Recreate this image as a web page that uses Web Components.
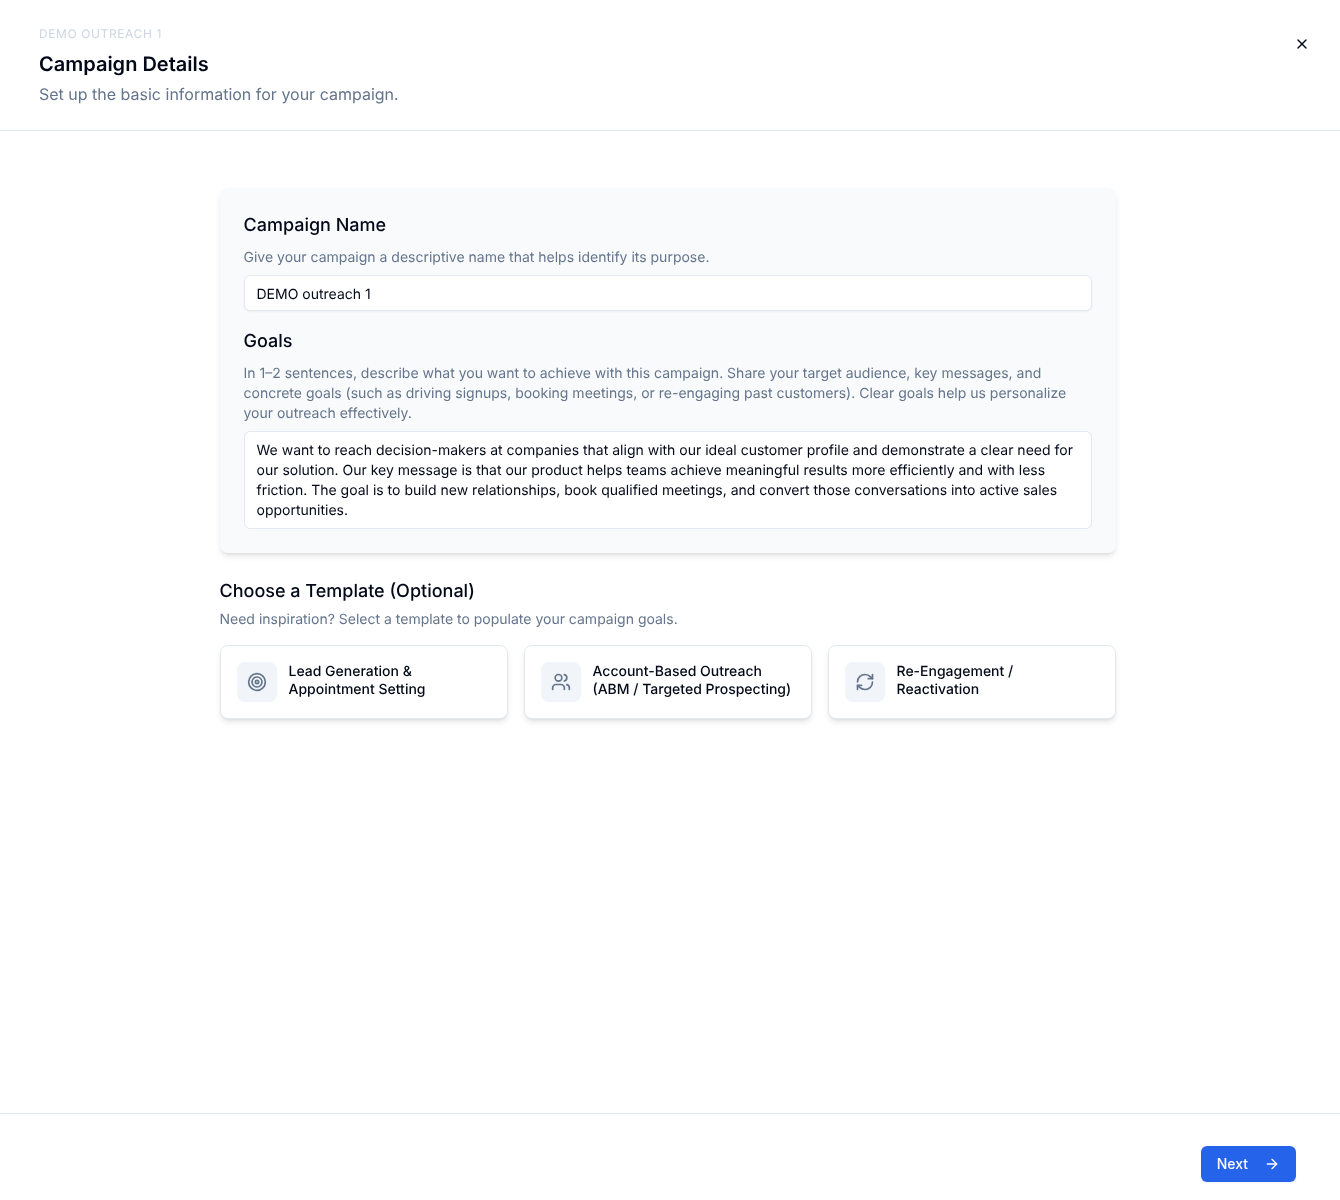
<!DOCTYPE html>
<html lang="en">
<head>
<meta charset="utf-8">
<title>Campaign Details</title>
<style>
    html, body { margin: 0; background: #fff; }
    body {
        font-family: Inter, "Liberation Sans", sans-serif;
        color: #020817;
        -webkit-font-smoothing: antialiased;
        text-rendering: geometricPrecision;
    }
</style>
</head>
<body>
<campaign-wizard>
    <wizard-header slot="header" eyebrow="DEMO outreach 1" title="Campaign Details" subtitle="Set up the basic information for your campaign."></wizard-header>

    <form-card>
        <form-field label="Campaign Name" hint="Give your campaign a descriptive name that helps identify its purpose.">
            <div class="value">DEMO outreach 1</div>
        </form-field>
        <form-field multiline label="Goals" hint="In 1–2 sentences, describe what you want to achieve with this campaign. Share your target audience, key messages, and concrete goals (such as driving signups, booking meetings, or re-engaging past customers). Clear goals help us personalize your outreach effectively.">
            <div class="value">We want to reach decision-makers at companies that align with our ideal customer profile and demonstrate a clear need for our solution. Our key message is that our product helps teams achieve meaningful results more efficiently and with less friction. The goal is to build new relationships, book qualified meetings, and convert those conversations into active sales opportunities.</div>
        </form-field>
    </form-card>

    <template-picker heading="Choose a Template (Optional)" hint="Need inspiration? Select a template to populate your campaign goals.">
        <template-card icon="target">Lead Generation &amp;<br>Appointment Setting</template-card>
        <template-card icon="users">Account-Based Outreach<br>(ABM / Targeted Prospecting)</template-card>
        <template-card icon="refresh">Re-Engagement /<br>Reactivation</template-card>
    </template-picker>

    <wizard-footer slot="footer"></wizard-footer>
</campaign-wizard>

<script>
'use strict';

const svg = (inner, size) => `<svg xmlns="http://www.w3.org/2000/svg" width="${size}" height="${size}" viewBox="0 0 24 24" fill="none" stroke="currentColor" stroke-width="2" stroke-linecap="round" stroke-linejoin="round">${inner}</svg>`;

const icons = {
    target: '<circle cx="12" cy="12" r="10"/><circle cx="12" cy="12" r="6"/><circle cx="12" cy="12" r="2"/>',
    users: '<path d="M16 21v-2a4 4 0 0 0-4-4H6a4 4 0 0 0-4 4v2"/><circle cx="9" cy="7" r="4"/><path d="M22 21v-2a4 4 0 0 0-3-3.87"/><path d="M16 3.13a4 4 0 0 1 0 7.75"/>',
    refresh: '<path d="M3 12a9 9 0 0 1 9-9 9.75 9.75 0 0 1 6.74 2.74L21 8"/><path d="M21 3v5h-5"/><path d="M21 12a9 9 0 0 1-9 9 9.75 9.75 0 0 1-6.74-2.74L3 16"/><path d="M8 16H3v5"/>',
    close: '<path d="M18 6 6 18"/><path d="m6 6 12 12"/>',
    arrow: '<path d="M5 12h14"/><path d="m12 5 7 7-7 7"/>',
};

class CampaignWizard extends HTMLElement {
    constructor()
    {
        super();
        this.attachShadow({ mode: 'open' }).innerHTML = `
            <style>
                :host {
                    display: flex;
                    flex-direction: column;
                    height: 1200px;
                    overflow: hidden;
                    will-change: transform;
                }
                main {
                    flex: 1;
                    display: flex;
                    flex-direction: column;
                    gap: 24px;
                    width: 896px;
                    padding-top: 57px;
                    margin-left: 219.5px;
                }
            </style>
            <slot name="header"></slot>
            <main><slot></slot></main>
            <slot name="footer"></slot>
        `;
    }
}

class WizardHeader extends HTMLElement {
    connectedCallback()
    {
        this.attachShadow({ mode: 'open' }).innerHTML = `
            <style>
                :host {
                    display: flex;
                    justify-content: space-between;
                    align-items: flex-start;
                    height: 130px;
                    padding: 0 30px 0 39px;
                    border-bottom: 1px solid #e2e8f0;
                }
                .eyebrow {
                    margin-top: 26px;
                    font-size: 12px;
                    line-height: 16px;
                    letter-spacing: 0.6px;
                    text-transform: uppercase;
                    color: #cbd5e1;
                }
                h1 {
                    margin: 8px 0 4px;
                    font-size: 20px;
                    line-height: 28px;
                    font-weight: 600;
                }
                p {
                    margin: 0;
                    font-size: 16px;
                    line-height: 24px;
                    color: #64748b;
                }
                .close {
                    display: flex;
                    margin-top: 36px;
                }
            </style>
            <div>
                <div class="eyebrow">${this.getAttribute('eyebrow')}</div>
                <h1>${this.getAttribute('title')}</h1>
                <p>${this.getAttribute('subtitle')}</p>
            </div>
            <span class="close">${svg(icons.close, 16)}</span>
        `;
    }
}

class FormCard extends HTMLElement {
    constructor()
    {
        super();
        this.attachShadow({ mode: 'open' }).innerHTML = `
            <style>
                :host {
                    display: flex;
                    flex-direction: column;
                    gap: 17px;
                    padding: 24px;
                    background: #f8fafc;
                    border-radius: 8px;
                    box-shadow: 0 4px 6px -1px rgba(0,0,0,.1), 0 2px 4px -2px rgba(0,0,0,.1);
                }
            </style>
            <slot></slot>
        `;
    }
}

class FormField extends HTMLElement {
    connectedCallback()
    {
        this.attachShadow({ mode: 'open' }).innerHTML = `
            <style>
                :host { display: block; }
                h2 {
                    margin: 0 0 8px;
                    font-size: 18px;
                    line-height: 28px;
                    font-weight: 500;
                }
                p {
                    margin: 0 0 7px;
                    font-size: 14px;
                    line-height: 20px;
                    color: #64748b;
                }
                .box {
                    padding: 9px 12px 5px;
                    font-size: 14px;
                    line-height: 20px;
                    background: #fff;
                    border: 1px solid #e2e8f0;
                    border-radius: 6px;
                    box-shadow: 0 1px 2px rgba(0,0,0,.05);
                }
                :host([multiline]) .box { padding: 9px 12px 7px; box-shadow: none; }
            </style>
            <h2>${this.getAttribute('label')}</h2>
            <p>${this.getAttribute('hint')}</p>
            <div class="box"><slot></slot></div>
        `;
    }
}

class TemplatePicker extends HTMLElement {
    connectedCallback()
    {
        this.attachShadow({ mode: 'open' }).innerHTML = `
            <style>
                :host { display: block; margin-top: 1px; }
                h2 {
                    margin: 0 0 4px;
                    font-size: 18px;
                    line-height: 28px;
                    font-weight: 500;
                }
                p {
                    margin: 0 0 15px;
                    font-size: 14px;
                    line-height: 20px;
                    color: #64748b;
                }
                .grid {
                    display: grid;
                    grid-template-columns: repeat(3, 1fr);
                    gap: 16px;
                }
            </style>
            <h2>${this.getAttribute('heading')}</h2>
            <p>${this.getAttribute('hint')}</p>
            <div class="grid"><slot></slot></div>
        `;
    }
}

class TemplateCard extends HTMLElement {
    connectedCallback()
    {
        this.attachShadow({ mode: 'open' }).innerHTML = `
            <style>
                :host {
                    display: flex;
                    align-items: flex-start;
                    gap: 12px;
                    padding: 16px;
                    background: #fff;
                    border: 1px solid #e2e8f0;
                    border-radius: 8px;
                    box-shadow: 0 4px 6px -1px rgba(0,0,0,.1), 0 2px 4px -2px rgba(0,0,0,.1);
                }
                .icon {
                    flex: none;
                    display: flex;
                    align-items: center;
                    justify-content: center;
                    width: 40px;
                    height: 40px;
                    border-radius: 8px;
                    background: #f1f5f9;
                    color: #64748b;
                }
                .label {
                    margin-top: 1px;
                    font-size: 14px;
                    line-height: 18px;
                    font-weight: 500;
                }
            </style>
            <span class="icon">${svg(icons[this.getAttribute('icon')], 20)}</span>
            <span class="label"><slot></slot></span>
        `;
    }
}

class WizardFooter extends HTMLElement {
    constructor()
    {
        super();
        this.attachShadow({ mode: 'open' }).innerHTML = `
            <style>
                :host {
                    display: flex;
                    justify-content: flex-end;
                    height: 54px;
                    padding: 32px 44px 0 0;
                    border-top: 1px solid #e2e8f0;
                }
                button {
                    display: flex;
                    align-items: center;
                    gap: 16px;
                    height: 36px;
                    padding: 0 16px;
                    border: 0;
                    border-radius: 6px;
                    background: #2563eb;
                    color: #fff;
                    font: 500 14px/20px Inter, "Liberation Sans", sans-serif;
                    box-shadow: 0 1px 2px rgba(0,0,0,.05);
                }
                svg { display: block; }
            </style>
            <button type="button">Next ${svg(icons.arrow, 16)}</button>
        `;
    }
}

customElements.define('campaign-wizard', CampaignWizard);
customElements.define('wizard-header', WizardHeader);
customElements.define('form-card', FormCard);
customElements.define('form-field', FormField);
customElements.define('template-picker', TemplatePicker);
customElements.define('template-card', TemplateCard);
customElements.define('wizard-footer', WizardFooter);
</script>
</body>
</html>
